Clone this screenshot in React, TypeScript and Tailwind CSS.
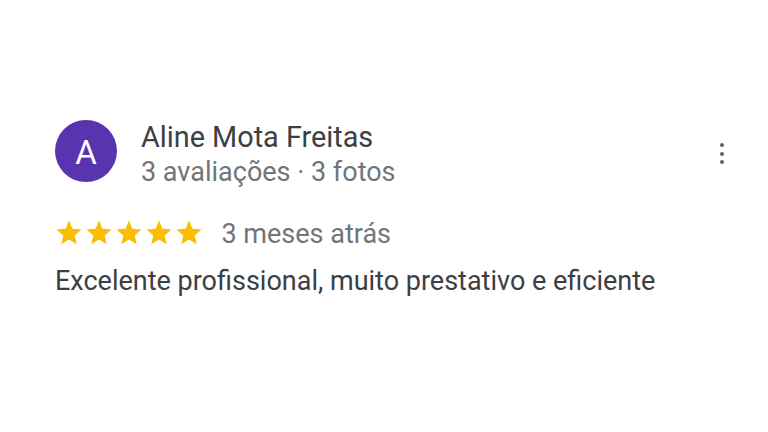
import React from "react";

const Star = () => (
  <svg width="30" height="30" viewBox="0 0 24 24" className="block">
    <path
      fill="#fbbc04"
      d="M12 17.27L18.18 21l-1.64-7.03L22 9.24l-7.19-.61L12 2 9.19 8.63 2 9.24l5.46 4.73L5.82 21z"
    />
  </svg>
);

export default function App() {
  return (
    <div
      className="w-[768px] h-[432px] bg-white overflow-hidden pt-[120px] pl-[55px] pr-[44px]"
      style={{ fontFamily: "Roboto, 'Noto Sans', sans-serif" }}
    >
      <div className="flex items-start">
        <div className="w-[62px] h-[62px] rounded-full bg-[#5a33ae] flex items-center justify-center pt-[2px] text-white text-[33px] leading-none shrink-0">
          A
        </div>
        <div className="ml-[24px]">
          <div className="text-[28.8px] leading-[34px] text-[#3c4043]">Aline Mota Freitas</div>
          <div className="text-[27px] leading-[36px] text-[#70757a]">3 avaliações · 3 fotos</div>
        </div>
        <div className="ml-auto mt-[23px] flex flex-col items-center gap-[4.5px]">
          <div className="w-[4px] h-[4px] rounded-full bg-[#5f6368]" />
          <div className="w-[4px] h-[4px] rounded-full bg-[#5f6368]" />
          <div className="w-[4px] h-[4px] rounded-full bg-[#5f6368]" />
        </div>
      </div>
      <div className="flex items-start mt-[28px] -ml-[1.5px]">
        <Star />
        <Star />
        <Star />
        <Star />
        <Star />
        <span className="ml-[18px] mt-[1px] text-[27px] text-[#70757a] leading-[30px]">3 meses atrás</span>
      </div>
      <div className="mt-[16px] text-[27px] leading-[32px] text-[#3c4043]">
        Excelente profissional, muito prestativo e eficiente
      </div>
    </div>
  );
}
